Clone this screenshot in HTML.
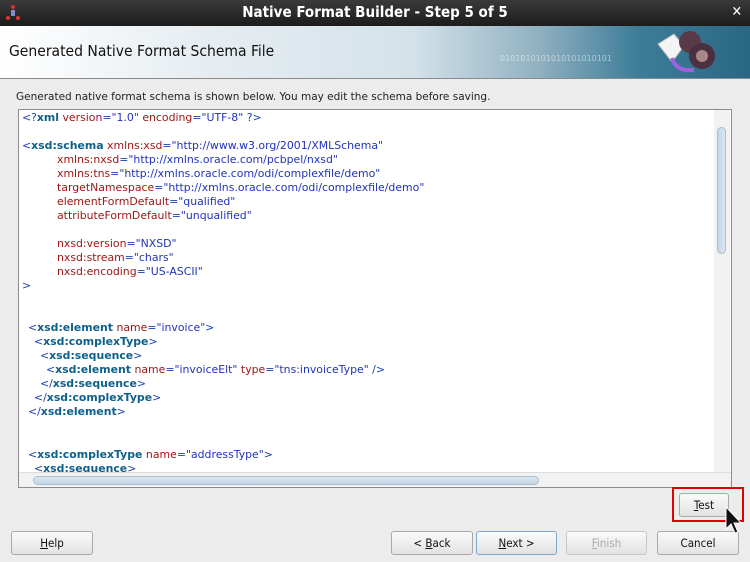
<!DOCTYPE html>
<html><head><style>
*{margin:0;padding:0;box-sizing:border-box}
body{width:750px;height:562px;overflow:hidden;background:#ececec;font-family:"DejaVu Sans","Liberation Sans",sans-serif;position:relative}
.title{position:absolute;left:0;top:0;width:750px;height:26px;background:linear-gradient(#3a3a3a,#1c1c1c);color:#fff;font-weight:bold;font-size:15px;text-align:center;line-height:25px;font-family:"DejaVu Sans Condensed","DejaVu Sans",sans-serif}
.hdr{position:absolute;left:0;top:26px;width:750px;height:53px;background:linear-gradient(90deg,#ffffff 0%,#e8eef2 25%,#d4e2ea 55%,#8fb0c0 72%,#3d7d98 85%,#2a6782 100%);border-bottom:1px solid #8a8a8a}
.hdr .t{position:absolute;left:9px;top:16px;font-size:15.5px;color:#111;font-family:"DejaVu Sans Condensed","DejaVu Sans",sans-serif}
.inst{position:absolute;left:16px;top:91px;font-size:10.5px;color:#222;font-family:"DejaVu Sans",sans-serif}
.ed{position:absolute;left:18px;top:109px;width:714px;height:379px;background:#fff;border:1px solid #8c8c8c}
.l{position:absolute;left:0;font-size:10.9px;white-space:pre;line-height:14px;font-family:"DejaVu Sans",sans-serif;color:#1a3fb0}
.g{color:#0d5f8c;font-weight:bold}
.a{color:#9e1414}
.v{color:#2233bb}
.vs{position:absolute;left:695px;top:0;width:16px;height:362px;background:#f2f2f2}
.vt{position:absolute;left:3px;top:17px;width:9px;height:127px;border-radius:5px;background:linear-gradient(90deg,#c5d6e6,#dbe6f0);border:1px solid #a8bed2}
.hs{position:absolute;left:0;top:362px;width:712px;height:15px;background:#f2f2f2;border-top:1px solid #ddd}
.ht{position:absolute;left:14px;top:3px;width:506px;height:9px;border-radius:5px;background:linear-gradient(#dbe6f0,#c5d6e6);border:1px solid #a8bed2}
.btn{position:absolute;height:24px;border:1px solid #aaa;border-radius:3px;background:linear-gradient(#fafafa,#e2e2e2);font-size:11.5px;color:#111;text-align:center;line-height:22px;font-family:"DejaVu Sans Condensed","DejaVu Sans",sans-serif}
u{text-decoration:underline}
</style></head><body>
<div class="title">Native Format Builder - Step 5 of 5<span style="position:absolute;right:8px;top:0;font-size:14px">✕</span>
<svg style="position:absolute;left:5px;top:4px" width="16" height="17"><circle cx="8" cy="3" r="2" fill="#e03030"/><rect x="6" y="6" width="4" height="6" fill="#8888cc"/><circle cx="3" cy="14" r="2" fill="#e03030"/><circle cx="13" cy="14" r="2" fill="#e03030"/></svg></div>
<div class="hdr"><div class="t">Generated Native Format Schema File</div>
<div style="position:absolute;left:500px;top:28px;font-size:8px;color:rgba(255,255,255,.5)">0101010101010101010101</div>
<svg style="position:absolute;left:650px;top:0" width="70" height="52"><path d="M8 18 L24 8 L34 20 L22 36 Z" fill="#f4f4f4" stroke="#bbb"/><path d="M22 32 Q26 46 44 44" stroke="#a060e0" stroke-width="4" fill="none"/><circle cx="40" cy="16" r="11" fill="#5a3a48"/><circle cx="52" cy="30" r="13" fill="#4a3040"/><circle cx="52" cy="30" r="6" fill="#a88"/></svg></div>
<div class="inst">Generated native format schema is shown below. You may edit the schema before saving.</div>
<div class="ed">
<div class="l" style="top:1px;left:3px">&lt;?<span class="g">xml</span> <span class="a">version</span>=<span class="v">"1.0"</span> <span class="a">encoding</span>=<span class="v">"UTF-8"</span> ?&gt;</div>
<div class="l" style="top:29px;left:3px">&lt;<span class="g">xsd:schema</span> <span class="a">xmlns:xsd</span>=<span class="v">"http://www.w3.org/2001/XMLSchema"</span></div>
<div class="l" style="top:43px;left:38px"><span class="a">xmlns:nxsd</span>=<span class="v">"http://xmlns.oracle.com/pcbpel/nxsd"</span></div>
<div class="l" style="top:57px;left:38px"><span class="a">xmlns:tns</span>=<span class="v">"http://xmlns.oracle.com/odi/complexfile/demo"</span></div>
<div class="l" style="top:71px;left:38px"><span class="a">targetNamespace</span>=<span class="v">"http://xmlns.oracle.com/odi/complexfile/demo"</span></div>
<div class="l" style="top:85px;left:38px"><span class="a">elementFormDefault</span>=<span class="v">"qualified"</span></div>
<div class="l" style="top:99px;left:38px"><span class="a">attributeFormDefault</span>=<span class="v">"unqualified"</span></div>
<div class="l" style="top:127px;left:38px"><span class="a">nxsd:version</span>=<span class="v">"NXSD"</span></div>
<div class="l" style="top:141px;left:38px"><span class="a">nxsd:stream</span>=<span class="v">"chars"</span></div>
<div class="l" style="top:155px;left:38px"><span class="a">nxsd:encoding</span>=<span class="v">"US-ASCII"</span></div>
<div class="l" style="top:169px;left:3px">&gt;</div>
<div class="l" style="top:211px;left:9px">&lt;<span class="g">xsd:element</span> <span class="a">name</span>=<span class="v">"invoice"</span>&gt;</div>
<div class="l" style="top:225px;left:15px">&lt;<span class="g">xsd:complexType</span>&gt;</div>
<div class="l" style="top:239px;left:21px">&lt;<span class="g">xsd:sequence</span>&gt;</div>
<div class="l" style="top:253px;left:27px">&lt;<span class="g">xsd:element</span> <span class="a">name</span>=<span class="v">"invoiceElt"</span> <span class="a">type</span>=<span class="v">"tns:invoiceType"</span> /&gt;</div>
<div class="l" style="top:267px;left:21px">&lt;/<span class="g">xsd:sequence</span>&gt;</div>
<div class="l" style="top:281px;left:15px">&lt;/<span class="g">xsd:complexType</span>&gt;</div>
<div class="l" style="top:295px;left:9px">&lt;/<span class="g">xsd:element</span>&gt;</div>
<div class="l" style="top:338px;left:9px">&lt;<span class="g">xsd:complexType</span> <span class="a">name</span>=<span class="v">"addressType"</span>&gt;</div>
<div class="l" style="top:352px;left:15px">&lt;<span class="g">xsd:sequence</span>&gt;</div>
<div class="vs"><div class="vt"></div></div>
<div class="hs"><div class="ht"></div></div>
</div>
<div style="position:absolute;left:672px;top:487px;width:72px;height:35px;border:2px solid #e00000"></div>
<div class="btn" style="left:679px;top:493px;width:50px"><u>T</u>est</div>
<div class="btn" style="left:11px;top:531px;width:82px"><u>H</u>elp</div>
<div class="btn" style="left:391px;top:531px;width:82px">&lt; <u>B</u>ack</div>
<div class="btn" style="left:476px;top:531px;width:81px;border-color:#7fa6d0"><u>N</u>ext &gt;</div>
<div class="btn" style="left:566px;top:531px;width:81px;color:#aaa;border-color:#c8c8c8"><u>F</u>inish</div>
<div class="btn" style="left:657px;top:531px;width:82px">Cancel</div>
<svg style="position:absolute;left:724px;top:505px" width="20" height="40"><path d="M2 2 L2 24 L7 19 L11 28 L14 27 L10 18 L17 18 Z" fill="#111" stroke="#fff" stroke-width="1"/></svg>
</body></html>
